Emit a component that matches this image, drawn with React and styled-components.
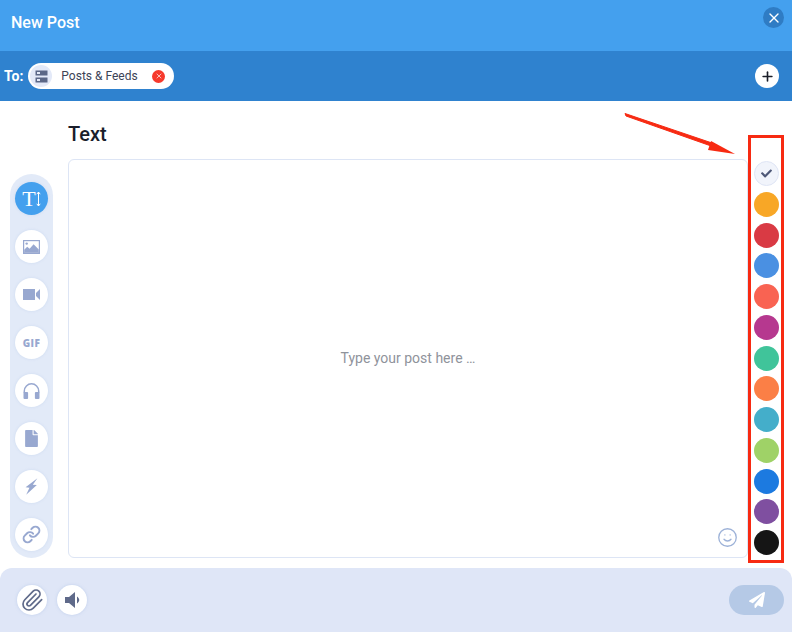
import React from "react";
import styled, { createGlobalStyle } from "styled-components";
import { FaFile, FaPaperPlane, FaCheck } from "react-icons/fa";
import { Paperclip, X, Plus, Smile, Link } from "lucide-react";

const GlobalStyle = createGlobalStyle`
  html, body {
    margin: 0;
    padding: 0;
    background: #fff;
    font-family: Roboto, "Liberation Sans", sans-serif;
  }
`;

const Modal = styled.div`
  position: relative;
  width: 792px;
  height: 632px;
  display: flex;
  flex-direction: column;
  overflow: hidden;
  background: #fff;
`;

const Header = styled.header`
  height: 51px;
  flex: none;
  display: flex;
  align-items: center;
  justify-content: space-between;
  padding: 0 8px 7px 11px;
  box-sizing: border-box;
  background: #44a0ee;
  color: #fff;
`;

const Title = styled.h1`
  margin: 0;
  font-size: 16px;
  font-weight: 500;
`;

const CloseButton = styled.div`
  width: 21px;
  height: 21px;
  margin-top: -9px;
  border-radius: 50%;
  background: #2f7cc4;
  color: #fff;
  display: flex;
  align-items: center;
  justify-content: center;
`;

const ToBar = styled.div`
  height: 50px;
  flex: none;
  display: flex;
  align-items: center;
  padding: 0 13px 0 4px;
  box-sizing: border-box;
  background: #2f82cf;
`;

const ToLabel = styled.span`
  color: #fff;
  font-size: 14px;
  font-weight: 700;
  margin-right: 5px;
`;

const Chip = styled.div`
  width: 146px;
  height: 26px;
  box-sizing: border-box;
  display: flex;
  align-items: center;
  padding: 0 9px 0 2px;
  border-radius: 13px;
  background: #fff;
`;

const ChipIcon = styled.div`
  width: 22px;
  height: 22px;
  flex: none;
  border-radius: 50%;
  background: #e3e9f8;
  color: #5b6787;
  display: flex;
  align-items: center;
  justify-content: center;
`;

const ChipText = styled.span`
  flex: 1;
  margin-left: 9px;
  color: #3c4356;
  font-size: 12px;
`;

const ChipRemove = styled.div`
  width: 13px;
  height: 13px;
  border-radius: 50%;
  background: #f6392c;
  color: #fff;
  display: flex;
  align-items: center;
  justify-content: center;
`;

const AddButton = styled.div`
  width: 24px;
  height: 24px;
  margin-left: auto;
  border-radius: 50%;
  background: #fff;
  color: #1b1e28;
  display: flex;
  align-items: center;
  justify-content: center;
`;

const Body = styled.main`
  flex: 1;
  display: flex;
  align-items: flex-end;
  padding: 0 0 10px 10px;
  min-height: 0;
`;

const Rail = styled.nav`
  width: 43px;
  height: 384px;
  flex: none;
  margin-right: 15px;
  box-sizing: border-box;
  padding: 8px 0 7px;
  border-radius: 22px;
  background: #e2eaf8;
  display: flex;
  flex-direction: column;
  align-items: center;
  justify-content: space-between;
`;

const RailButton = styled.div`
  width: 33px;
  height: 33px;
  border-radius: 50%;
  background: ${(p) => (p.$active ? "#44a0ee" : "#fff")};
  color: ${(p) => (p.$active ? "#fff" : "#98a8d0")};
  box-shadow: 0 0 3px rgba(160, 185, 225, 0.3);
  display: flex;
  align-items: center;
  justify-content: center;
  font-size: 17px;
`;

const TextGlyph = styled.span`
  font-family: "Liberation Serif", serif;
  font-size: 22px;
  line-height: 1;
`;

const GifLabel = styled.span`
  font-family: "Open Sans", sans-serif;
  font-size: 10px;
  font-weight: 800;
  letter-spacing: 0.4px;
`;

const Composer = styled.section`
  width: 680px;
  height: 100%;
  flex: none;
  display: flex;
  flex-direction: column;
`;

const SectionTitle = styled.h2`
  margin: 0;
  height: 58px;
  flex: none;
  display: flex;
  align-items: center;
  padding-top: 8px;
  box-sizing: border-box;
  color: #1a1e2b;
  font-size: 20px;
  font-weight: 500;
`;

const Editor = styled.div`
  flex: 1;
  position: relative;
  box-sizing: border-box;
  border: 1px solid #dde5f5;
  border-radius: 6px;
  padding-bottom: 2px;
  display: flex;
  align-items: center;
  justify-content: center;
  color: #8f939b;
  font-size: 14px;
`;

const Emoji = styled.div`
  position: absolute;
  right: 9px;
  bottom: 9px;
  color: #9db2d8;
  display: flex;
`;

const Swatches = styled.div`
  width: 25px;
  height: 100%;
  flex: none;
  margin-left: 6px;
  box-sizing: border-box;
  padding-top: 60px;
  padding-bottom: 3px;
  display: flex;
  flex-direction: column;
  justify-content: space-between;
`;

const Swatch = styled.div`
  width: 25px;
  height: 25px;
  box-sizing: border-box;
  border-radius: 50%;
  background: ${(p) => p.$color};
  border: ${(p) => (p.$selected ? "1px solid #dfe5f5" : "none")};
  color: #4e5877;
  display: flex;
  align-items: center;
  justify-content: center;
  font-size: 11px;
`;

const Footer = styled.footer`
  height: 64px;
  flex: none;
  display: flex;
  align-items: center;
  gap: 10px;
  padding: 0 8px 0 17px;
  box-sizing: border-box;
  border-radius: 12px 12px 0 0;
  background: #dfe6f7;
`;

const FooterButton = styled.div`
  width: 30px;
  height: 30px;
  border-radius: 50%;
  background: #fff;
  color: #5f6a8a;
  box-shadow: 0 0 3px rgba(160, 185, 225, 0.5);
  display: flex;
  align-items: center;
  justify-content: center;
`;

const SendButton = styled.div`
  width: 55px;
  height: 30px;
  margin-left: auto;
  border-radius: 15px;
  background: #b5c9e6;
  color: #fff;
  display: flex;
  align-items: center;
  justify-content: center;
  font-size: 16px;
`;

const Annotation = styled.svg`
  position: absolute;
  left: 0;
  top: 0;
  pointer-events: none;
`;

const ServerIcon = () => (
  <svg width="13" height="13" viewBox="0 0 13 13" fill="currentColor">
    <path d="M0.5 0.5h12v5h-12zM0.5 7.5h12v5h-12z" />
    <path d="M2 2h3v2H2zM2 9h3v2H2z" fill="#e3e9f8" />
  </svg>
);

const ImageIcon = () => (
  <svg width="17" height="14" viewBox="0 0 17 14">
    <path fill="currentColor" d="M0 0h17v14H0z" />
    <path fill="#fff" d="M1.2 1.2h14.6v11H1.2z" />
    <circle cx="3.7" cy="3.6" r="1.2" fill="currentColor" />
    <path fill="currentColor" d="M1.2 12.2v-2.4l3-3 2.4 2 4-4.6 5.2 5.4v2.6z" />
  </svg>
);

const VideoIcon = () => (
  <svg width="17" height="11" viewBox="0 0 17 11" fill="currentColor">
    <path d="M0 0h12v11H0z" />
    <path d="M13 4 17 0v11l-4-4z" />
  </svg>
);

const HeadphonesIcon = () => (
  <svg width="17" height="16" viewBox="0 0 17 16" fill="currentColor">
    <path d="M1.3 10V8a7.2 7.2 0 0 1 14.4 0v2" fill="none" stroke="currentColor" strokeWidth="1.5" />
    <rect x="0.5" y="9" width="4.6" height="7" rx="1" />
    <rect x="11.9" y="9" width="4.6" height="7" rx="1" />
  </svg>
);

const BoltIcon = () => (
  <svg width="13" height="17" viewBox="0 0 11 14" fill="currentColor">
    <path d="M10.5 0 6.6 5.6 10 5.8 1 14l2.8-6L0.5 7.6z" />
  </svg>
);

const VolumeIcon = () => (
  <svg width="15" height="16" viewBox="0 0 15 16" fill="currentColor">
    <path d="M0 5h4l6-5v16l-6-5H0z" />
    <path d="M12 4.5c1.4 1 2.2 2.2 2.2 3.5s-.8 2.5-2.2 3.5z" />
  </svg>
);

const colors = [
  "#f8a726",
  "#d93a44",
  "#4a90e2",
  "#f96352",
  "#b6388f",
  "#40c49a",
  "#fb7f46",
  "#44aeca",
  "#9fd267",
  "#1c7ae0",
  "#7f4fa0",
  "#151515",
];

const App = () => (
  <Modal>
    <GlobalStyle />
    <Header>
      <Title>New Post</Title>
      <CloseButton>
        <X size={16} strokeWidth={2} />
      </CloseButton>
    </Header>
    <ToBar>
      <ToLabel>To:</ToLabel>
      <Chip>
        <ChipIcon>
          <ServerIcon />
        </ChipIcon>
        <ChipText>Posts &amp; Feeds</ChipText>
        <ChipRemove>
          <X size={8} strokeWidth={2} />
        </ChipRemove>
      </Chip>
      <AddButton>
        <Plus size={15} strokeWidth={2.6} />
      </AddButton>
    </ToBar>
    <Body>
      <Rail>
        <RailButton $active>
          <TextGlyph>T</TextGlyph>
          <svg width="5" height="16" viewBox="0 0 5 16">
            <path d="M2.5 1v14M.8 3.2 2.5 1l1.7 2.2M.8 12.8 2.5 15l1.7-2.2" fill="none" stroke="currentColor" strokeWidth="1" />
          </svg>
        </RailButton>
        <RailButton>
          <ImageIcon />
        </RailButton>
        <RailButton>
          <VideoIcon />
        </RailButton>
        <RailButton>
          <GifLabel>GIF</GifLabel>
        </RailButton>
        <RailButton>
          <HeadphonesIcon />
        </RailButton>
        <RailButton>
          <FaFile />
        </RailButton>
        <RailButton>
          <BoltIcon />
        </RailButton>
        <RailButton>
          <Link size={19} strokeWidth={2.5} />
        </RailButton>
      </Rail>
      <Composer>
        <SectionTitle>Text</SectionTitle>
        <Editor>
          Type your post here …
          <Emoji>
            <Smile size={21} strokeWidth={1.5} />
          </Emoji>
        </Editor>
      </Composer>
      <Swatches>
        <Swatch $color="#f1f4fb" $selected>
          <FaCheck />
        </Swatch>
        {colors.map((c) => (
          <Swatch key={c} $color={c} />
        ))}
      </Swatches>
    </Body>
    <Footer>
      <FooterButton>
        <Paperclip size={24} strokeWidth={1.7} />
      </FooterButton>
      <FooterButton>
        <VolumeIcon />
      </FooterButton>
      <SendButton>
        <FaPaperPlane />
      </SendButton>
    </Footer>
    <Annotation width="792" height="632" viewBox="0 0 792 632">
      <rect x="749.5" y="136.5" width="33" height="425" fill="none" stroke="#f72a12" strokeWidth="3" />
      <path d="M625 113.5 L626 116 L714 147 L715 144 Z" fill="#f72a12" stroke="#f72a12" strokeWidth="1" />
      <path d="M735 154 L708 150 L711 141 Z" fill="#f72a12" />
    </Annotation>
  </Modal>
);

export default App;
